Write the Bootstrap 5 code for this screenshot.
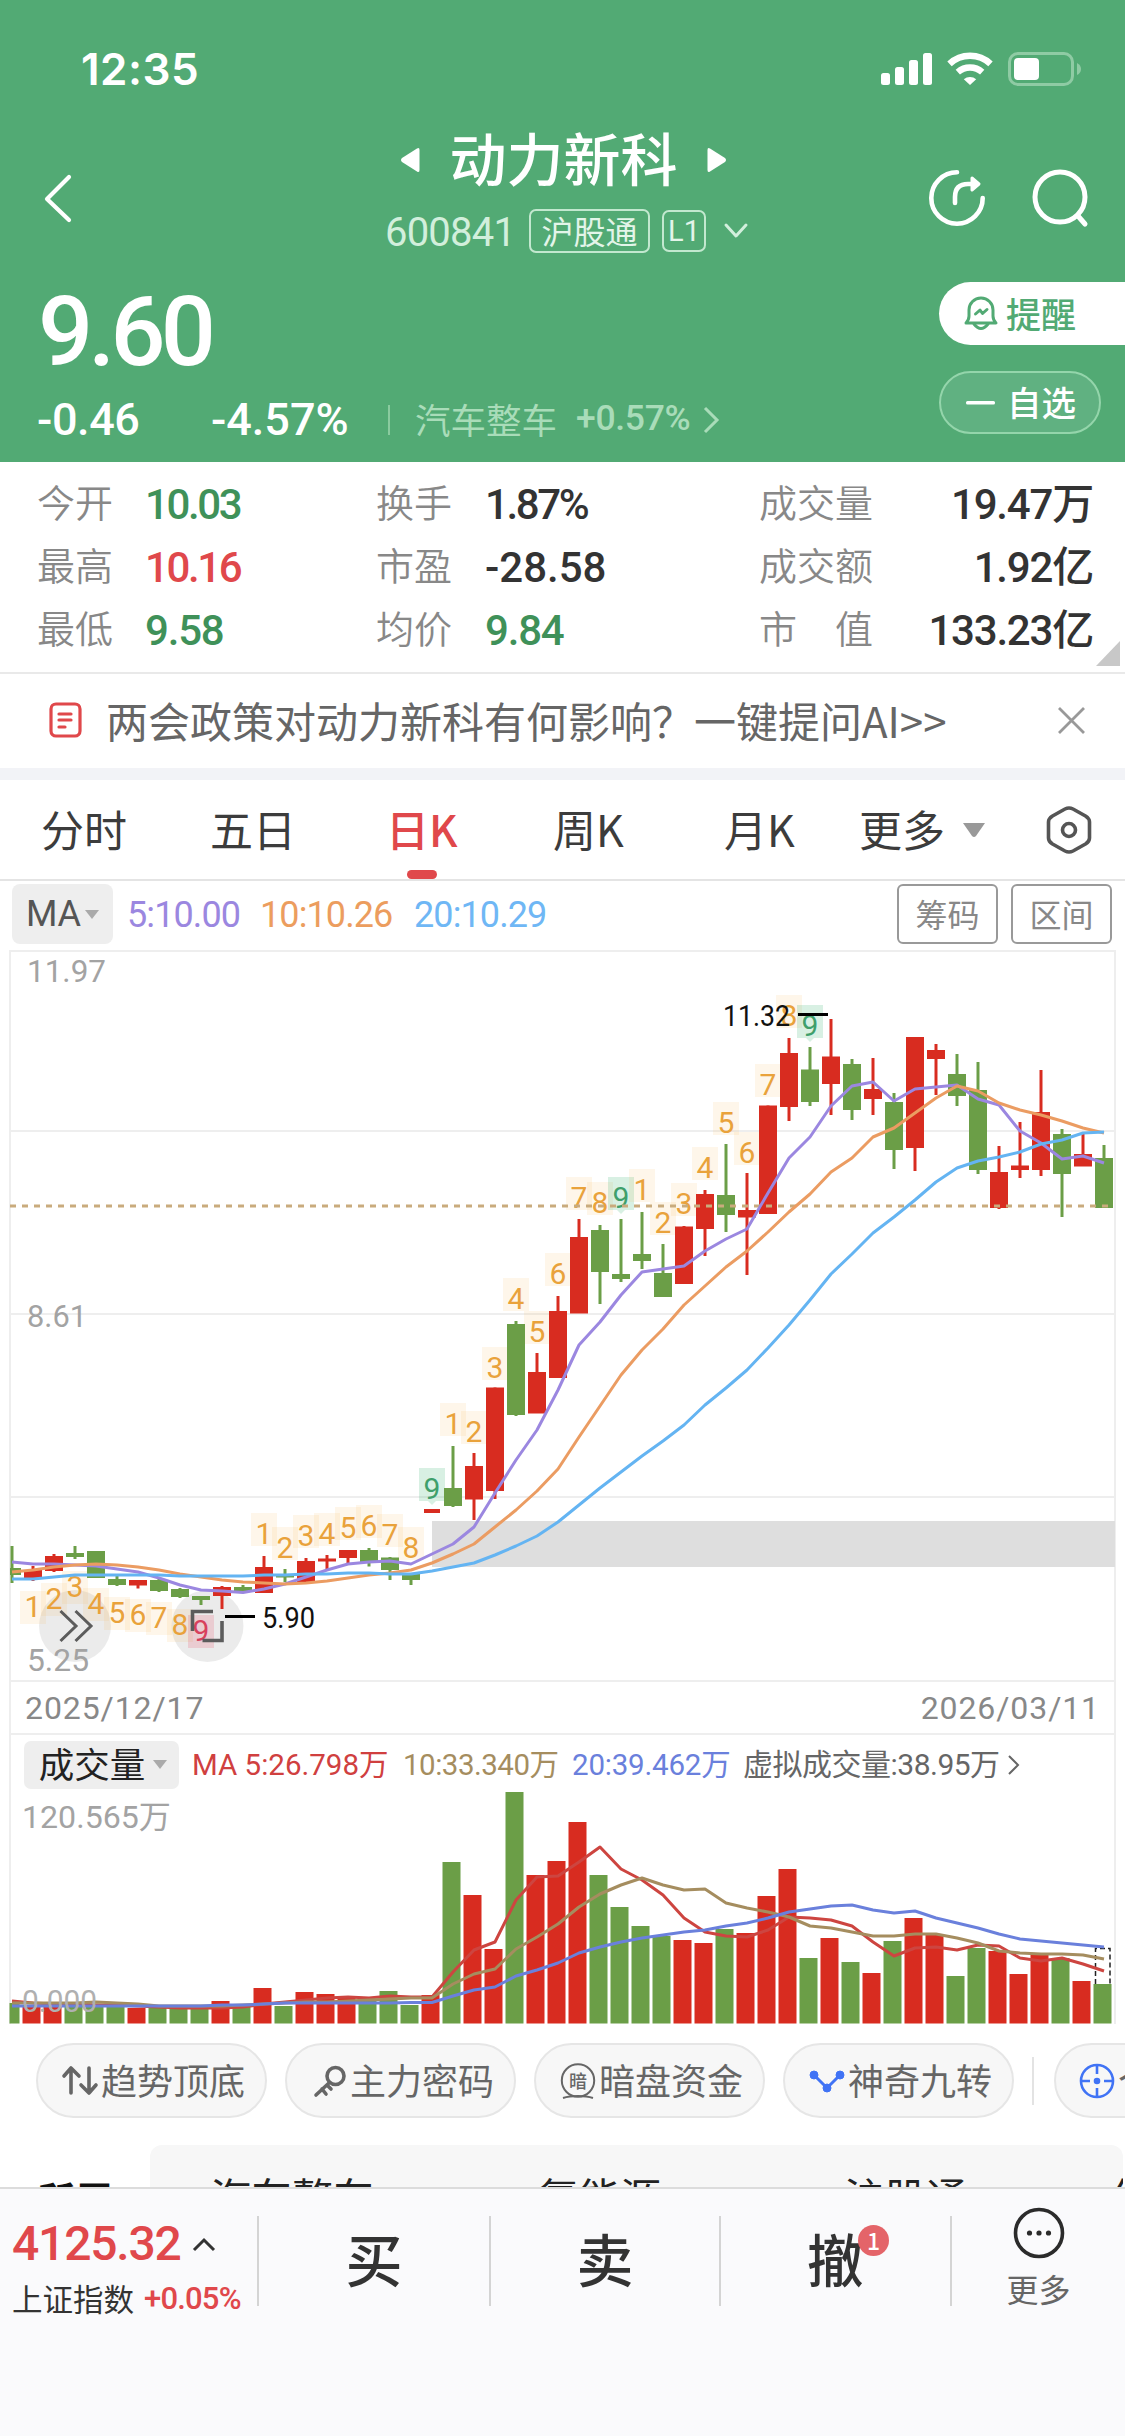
<!DOCTYPE html>
<html lang="zh-CN">
<head>
<meta charset="utf-8">
<meta name="viewport" content="width=device-width, initial-scale=1">
<title>动力新科 600841</title>
<link href="https://cdn.jsdelivr.net/npm/bootstrap@5.3.0/dist/css/bootstrap.min.css" rel="stylesheet">
<style>
  html,body{width:1125px;height:2436px;overflow:hidden}
  body{font-family:Roboto,"Noto Sans CJK SC",sans-serif;line-height:1;background:#fff;color:#333;white-space:nowrap}
  svg{display:block;flex:none;overflow:visible}
  svg text{font-family:Roboto,"Noto Sans CJK SC",sans-serif}
  .cjk{font-family:"Noto Sans CJK SC",sans-serif}
  .phone{height:2436px;overflow:hidden}
  .hero{height:462px;background:#52aa74;color:#fff}
  .statusbar{height:132px;padding:6px 43px 0 81px}
  .clock{font:600 44px/1 Inter,sans-serif;letter-spacing:.5px}
  .navrow{height:132px;padding:0 36px 0 44px}
  .side{width:200px}
  .titlecol{align-self:flex-start;margin-top:-3px;padding-right:7px}
  .ttl{font-size:57px;height:58px;font-weight:500}
  .ttl span{padding:0 29px 0 30px;margin-top:-4px}
  .ttl svg{margin-top:4px}
  .subrow{height:44px;margin-top:22px;padding-left:7px}
  .code{font-size:40px;color:#d2efdc;letter-spacing:-.8px;width:144px;padding-top:4px}
  .tagbox{border:2px solid #c2e8cf;border-radius:7px;height:44px;color:#e3f5e9;font-size:32px;padding-bottom:2px}
  .t1{width:121px}.t2{width:44px;height:42px;font-size:29px;margin-left:12px;padding-bottom:0}
  .price{font-size:97px;font-weight:500;letter-spacing:-4.8px;height:97px;padding-left:38px;margin-top:20px}
  .chg{font-size:45px;font-weight:500;height:45px;padding-left:37px;margin-top:16px}
  .sector{color:#a9dcb9;font-size:35.5px;font-weight:400;margin-top:-2px}
  .rightcol{width:186px;padding-top:18px}
  .pillA{height:63px;border-radius:32px 0 0 32px;background:#fff;color:#52aa74;font-size:35px;font-weight:500;padding:0 0 2px 25px}
  .pillB{height:63px;width:162px;margin-top:26px;border:2px solid #94d5ab;border-radius:32px;background:#60b181;font-size:34.5px;font-weight:500;padding:0 0 2px 25px}
  .stats{height:212px;padding:9px 32px 0 37px;border-bottom:2px solid #e9e9e9}
  .srow{height:63px}
  .lab{color:#888;font-size:38px;font-weight:350;padding-bottom:3px}
  .val{font-size:42px;font-weight:500;letter-spacing:-1.2px;padding-top:5px}
  .tight{letter-spacing:-2.4px}
  .sc1{width:108px}.sc2{width:231px}.sc3{width:109px}.sc4{width:274px}.sc5{width:117px}
  .up{color:#e0484b}.down{color:#3f9159}
  .news{height:94px;padding:0 40px 2px 49px;color:#666;font-size:42px}
  .band{height:12px;background:#f2f3f7}
  .tabsrow{height:101px;border-bottom:2px solid #e4e4e4;font-size:43px;color:#3c3c3c}
  .tabsrow>div{position:relative;height:99px;padding-bottom:3px}
  .ind{position:absolute;left:50%;margin-left:-15px;bottom:-3px;width:30px;height:9px;border-radius:5px;background:#e0484b}
  .marow{height:70px;padding:3px 13px 0 12px;font-size:36px}
  .mabtn{height:60px;width:101px;background:#eee;border-radius:8px;color:#555}
  .mavals{height:60px;letter-spacing:-.9px;padding:2px 0 0 14px}
  .mini{height:60px;width:101px;border:2px solid #999;border-radius:6px;color:#888;font-size:32px;padding-bottom:2px}
  .kframe{margin:-1px 9px 0;border:2px solid #eee;border-bottom:0;height:1074px}
  .dates{height:55px;border-top:2px solid #eee;border-bottom:2px solid #eee;padding:1px 14px 0 14px;font-size:32px;color:#888;letter-spacing:.9px}
  .volhead{height:58px;padding:1px 0 0 13px;font-size:30px}
  .volbtn{width:155px;height:48px;background:#eee;border-radius:7px;font-size:35.5px;color:#222;padding:0 0 3px 3px}
  .vm{font-size:29.5px;padding-top:2px}
  .chips{height:75px;margin-top:19px;padding-left:36px;gap:18px}
  .chip{flex:none;width:231px;height:75px;border:2px solid #e6e6e6;border-radius:38px;background:#f7f7f7;font-size:36px;color:#666;padding:0 0 3px 21px;gap:3px}
  .chip svg{margin-top:3px}
  .strip{height:42px;margin-top:27px;overflow:hidden}
  .own{width:150px;font-size:38px;font-weight:700;color:#111;padding:34px 0 0 37px}
  .panel{width:973px;height:80px;background:#f7f7f7;border-radius:12px;font-size:41px;color:#222;padding:30px 0 0 60px}
  .panel div{flex:none}
  .tray{height:249px;border-top:2px solid #dcdcdc;background:#fafafc}
  .cell{position:relative;height:90px;margin-top:27px;border-left:2px solid #d4d4d4;font-size:57px;font-weight:500;color:#333;padding-bottom:7px}
  .cnt{position:absolute;width:31px;height:31px;border-radius:50%;background:#e46469;color:#fff;font-size:23px;left:137px;top:9px}
</style>
<script src="https://cdn.jsdelivr.net/npm/bootstrap@5.3.0/dist/js/bootstrap.bundle.min.js"></script>
</head>
<body>
<div class="phone d-flex flex-column">
  <header class="hero">
    <div class="statusbar d-flex align-items-center justify-content-between">
      <span class="clock">12:35</span>
      <svg width="201" height="34" viewBox="0 0 201 34" fill="#fff">
        <rect x="0" y="21" width="9" height="12" rx="2.5"/><rect x="14" y="15" width="9" height="18" rx="2.5"/><rect x="28" y="8" width="9" height="25" rx="2.5"/><rect x="42" y="1" width="9" height="32" rx="2.5"/>
        <g fill="none" stroke="#fff" stroke-width="6.4"><path d="M68.500 11.800a30 30 0 0 1 41 0"/><path d="M76.800 20.200a18.300 18.300 0 0 1 24.400 0"/></g>
        <path d="M82.800 27.200a10 10 0 0 1 12.400 0L89 33z"/>
        <rect x="128.500" y="1.500" width="63" height="31" rx="8.500" fill="none" stroke="#8fcba4" stroke-width="3"/><rect x="133" y="6" width="25" height="22" rx="4"/><path d="M196 11q4 2 4 6t-4 6z" fill="#8fcba4"/>
      </svg>
    </div>
    <div class="navrow d-flex align-items-center justify-content-between">
      <div class="side"><svg width="28" height="48" viewBox="0 0 28 48" fill="none" stroke="#fff" stroke-width="4.200" stroke-linecap="round" stroke-linejoin="round"><path d="M25 3 3 25l22 21"/></svg></div>
      <div class="titlecol d-flex flex-column align-items-center">
        <div class="ttl cjk d-flex align-items-center">
          <svg width="20" height="26" viewBox="0 0 20 26" fill="#fff"><path d="M17 1.500q2.500-1.500 2.500 1.500v20q0 3-2.500 1.500L2 15q-2-2 0-4z"/></svg>
          <span>动力新科</span>
          <svg width="20" height="26" viewBox="0 0 20 26" fill="#fff"><path d="M3 1.500Q.5 0 .5 3v20q0 3 2.500 1.500L18 15q2-2 0-4z"/></svg>
        </div>
        <div class="subrow d-flex align-items-center">
          <span class="code">600841</span>
          <span class="tagbox t1 cjk d-flex align-items-center justify-content-center">沪股通</span>
          <span class="tagbox t2 d-flex align-items-center justify-content-center">L1</span>
          <svg style="margin-left:18px" width="24" height="16" viewBox="0 0 24 16" fill="none" stroke="#d2efdc" stroke-width="3" stroke-linecap="round" stroke-linejoin="round"><path d="m2 2 10 11L22 2"/></svg>
        </div>
      </div>
      <div class="side d-flex justify-content-end align-items-center">
        <svg width="58" height="58" viewBox="0 0 58 58" fill="none" stroke="#fff" stroke-width="4.600" stroke-linecap="round" stroke-linejoin="round"><path d="M29 3.300A25.700 25.700 0 1 0 54.700 29"/><path d="M27 34V28q0-13 13-13h8"/><path d="m44 9 7 6-7 6z" fill="#fff" stroke-width="3"/></svg>
        <svg style="margin-left:45px" width="58" height="58" viewBox="0 0 58 58" fill="none" stroke="#fff" stroke-width="5" stroke-linecap="round"><circle cx="29" cy="28" r="25"/><path d="m47 47 7 8"/></svg>
      </div>
    </div>
    <div class="d-flex justify-content-between">
      <div>
        <div class="price">9.60</div>
        <div class="chg d-flex align-items-center">
          <span style="width:174px;letter-spacing:-.4px">-0.46</span><span style="width:177px">-4.57%</span>
          <svg width="2" height="30"><path d="M1 0v30" stroke="#8acb9f" stroke-width="2"/></svg>
          <span class="sector cjk" style="margin-left:25px">汽车整车</span><span class="sector" style="margin-left:19px;font-weight:500;letter-spacing:-.3px">+0.57%</span>
          <svg style="margin-left:13px" width="16" height="26" viewBox="0 0 16 26" fill="none" stroke="#a9dcb9" stroke-width="3"><path d="m2 1 12 12L2 25"/></svg>
        </div>
      </div>
      <div class="rightcol">
        <div class="pillA cjk d-flex align-items-center">
          <svg style="margin-right:8px" width="34" height="36" viewBox="0 0 34 36" fill="none" stroke="#52aa74" stroke-width="3" stroke-linecap="round" stroke-linejoin="round"><path d="M2 28q3-3 3-7v-6a12 12 0 0 1 24 0v6q0 4 3 7z"/><path d="M10 29q7 9 14 0"/><path d="m11.500 19 4.500-4 2.500 3.500 4.500-4"/></svg>提醒</div>
        <div class="pillB cjk d-flex align-items-center"><svg style="margin-right:12px;margin-top:2px" width="29" height="4"><rect width="29" height="3.500" rx="1.500" fill="#fff"/></svg>自选</div>
      </div>
    </div>
  </header>

  <section class="stats position-relative">
    <div class="srow d-flex align-items-center"><span class="lab cjk sc1">今开</span><span class="val sc2 down tight">10.03</span><span class="lab cjk sc3">换手</span><span class="val sc4 tight">1.87%</span><span class="lab cjk sc5">成交量</span><span class="val ms-auto">19.47万</span></div>
    <div class="srow d-flex align-items-center"><span class="lab cjk sc1">最高</span><span class="val sc2 up tight">10.16</span><span class="lab cjk sc3">市盈</span><span class="val sc4" style="letter-spacing:0">-28.58</span><span class="lab cjk sc5">成交额</span><span class="val ms-auto">1.92亿</span></div>
    <div class="srow d-flex align-items-center"><span class="lab cjk sc1">最低</span><span class="val sc2 down">9.58</span><span class="lab cjk sc3">均价</span><span class="val sc4 down">9.84</span><span class="lab cjk sc5">市　值</span><span class="val ms-auto">133.23亿</span></div>
    <svg class="position-absolute bottom-0 end-0" style="margin:0 5px 6px 0" width="24" height="25"><path d="M24 0v25H0z" fill="#c8c8c8"/></svg>
  </section>

  <section class="news cjk d-flex align-items-center">
    <svg style="margin-right:24px" width="33" height="36" viewBox="0 0 33 36" fill="none" stroke="#e0484b" stroke-width="3.200" stroke-linecap="round"><rect x="2" y="2" width="29" height="32" rx="5"/><path d="M10 12h12M10 18h12M10 25h6"/></svg>
    <span>两会政策对动力新科有何影响？一键提问AI&gt;&gt;</span>
    <svg class="ms-auto" width="27" height="27" viewBox="0 0 27 27" stroke="#999" stroke-width="2.800"><path d="M1 1l25 25M26 1 1 26"/></svg>
  </section>
  <div class="band"></div>

  <nav class="tabsrow cjk d-flex align-items-center">
    <div class="d-flex align-items-center" style="padding-left:41px;width:210px">分时</div>
    <div class="d-flex align-items-center" style="width:176px">五日</div>
    <div class="d-flex align-items-center" style="width:167px"><span class="position-relative d-flex align-items-center h-100" style="color:#e0484b;font-weight:500">日K<i class="ind"></i></span></div>
    <div class="d-flex align-items-center" style="width:171px">周K</div>
    <div class="d-flex align-items-center" style="width:135px">月K</div>
    <div class="d-flex align-items-center" style="width:187px">更多<svg style="margin-left:18px;margin-top:4px" width="22" height="15"><path d="M0 0h22l-9 13q-2 2-4 0z" fill="#999"/></svg></div>
    <svg width="46" height="48" viewBox="0 0 46 48" fill="none" stroke="#555" stroke-width="3.600" stroke-linejoin="round"><path d="M19 3q4-2 8 0l12.500 7q4 2.500 4 6v16q0 3.500-4 6L27 45q-4 2-8 0L6.500 38q-4-2.500-4-6V16q0-3.500 4-6z"/><circle cx="23" cy="24" r="6.500"/></svg>
  </nav>

  <div class="marow d-flex align-items-start">
    <div class="mabtn d-flex align-items-center justify-content-center">MA<svg style="margin-left:4px" width="14" height="9"><path d="M0 0h14L7 9z" fill="#aaa"/></svg></div>
    <div class="mavals d-flex align-items-center">
      <span style="color:#9b87e0;width:133px">5:10.00</span>
      <span style="color:#ec9d5e;width:154px">10:10.26</span><span style="color:#6fb7f5">20:10.29</span>
    </div>
    <div class="mini cjk ms-auto d-flex align-items-center justify-content-center">筹码</div>
    <div class="mini cjk d-flex align-items-center justify-content-center" style="margin-left:13px">区间</div>
  </div>

  <div class="kframe">
    <svg id="kline" width="1103" height="728" viewBox="11 952 1103 728"></svg>
    <div class="dates d-flex align-items-center justify-content-between"><span>2025/12/17</span><span>2026/03/11</span></div>
    <div class="volhead d-flex align-items-center">
      <div class="volbtn cjk d-flex align-items-center justify-content-center">成交量<svg style="margin-left:8px;margin-top:3px" width="14" height="9"><path d="M0 0h14L7 9z" fill="#aaa"/></svg></div>
      <span class="vm" style="color:#d0403f;margin-left:13px;width:211px">MA 5:26.798万</span>
      <span class="vm" style="color:#a58d5f;width:169px;letter-spacing:-.5px">10:33.340万</span>
      <span class="vm" style="color:#6a80dc;width:171px;letter-spacing:-.2px">20:39.462万</span>
      <span style="color:#666;font-size:30px;letter-spacing:-.5px">虚拟成交量:38.95万</span>
      <svg style="margin-left:8px" width="12" height="20" fill="none" stroke="#666" stroke-width="2"><path d="m1 1 9 9-9 9"/></svg>
    </div>
    <svg id="volume" width="1103" height="232" viewBox="11 1793 1103 232"></svg>
  </div>

  <div class="chips d-flex align-items-center">
    <div class="chip cjk d-flex align-items-center"><svg style="margin-left:3px" width="36" height="29" viewBox="0 0 36 29" fill="none" stroke="#666" stroke-width="3.600" stroke-linecap="round" stroke-linejoin="round"><path d="M9 27V3M2 10l7-8 8 8M27 2v24M19 19l8 8 7-8"/></svg>趋势顶底</div>
    <div class="chip cjk d-flex align-items-center"><svg style="margin-left:5px" width="34" height="34" viewBox="0 0 34 34" fill="none" stroke="#666" stroke-width="3.600" stroke-linecap="round"><circle cx="22.500" cy="12" r="8.500"/><path d="M16 19 3 31M9 25l4 5M14 21l4 4"/></svg>主力密码</div>
    <div class="chip cjk d-flex align-items-center"><svg style="margin-left:3px" width="36" height="36" viewBox="0 0 36 36" fill="none" stroke="#666" stroke-width="2"><circle cx="18" cy="17.500" r="16.200"/><path d="M3 35q6-2 15-2t15 2"/><text x="18" y="24.500" text-anchor="middle" font-size="18" font-weight="500" fill="#666" stroke="none">暗</text></svg>暗盘资金</div>
    <div class="chip cjk d-flex align-items-center"><svg style="margin-left:3px" width="36" height="24" viewBox="0 0 36 24" fill="#4073f5" stroke="#4073f5"><path d="m5 6 13 13L31 6" fill="none" stroke-width="3"/><circle cx="5" cy="6" r="4"/><circle cx="31" cy="6" r="4"/><circle cx="18" cy="19" r="4"/></svg>神奇九转</div>
    <svg width="2" height="48"><path d="M1 0v48" stroke="#e3e3e3" stroke-width="2"/></svg>
    <div class="chip cjk d-flex align-items-center" style="margin-left:2px"><svg style="margin-left:2px" width="36" height="36" viewBox="0 0 36 36" fill="none" stroke="#4073f5" stroke-width="2.600"><circle cx="18" cy="18" r="16"/><path d="M18 2v9M18 25v9M2 18h9M25 18h9"/><circle cx="18" cy="18" r="2" fill="#4073f5"/></svg>个股诊断</div>
  </div>

  <div class="strip d-flex align-items-start">
    <div class="own cjk">所属</div>
    <div class="panel cjk d-flex"><div style="width:328px">汽车整车</div><div style="width:306px">氢能源</div><div style="width:265px">沪股通</div><div style="width:14px;overflow:hidden">化工</div></div>
  </div>

  <footer class="tray d-flex">
    <div style="width:257px;padding:29px 0 0 12px">
      <div class="d-flex align-items-center" style="font-size:48px;font-weight:500;color:#e0484b;height:52px;letter-spacing:-1.2px">4125.32<svg style="margin-left:12px" width="22" height="13" fill="none" stroke="#333" stroke-width="3"><path d="M1 12 11 2l10 10"/></svg></div>
      <div class="d-flex align-items-center" style="height:34px;margin-top:11px"><span class="cjk" style="font-size:30.5px;color:#333;width:132px">上证指数</span><span class="up" style="font-size:31px;font-weight:500;letter-spacing:-.8px">+0.05%</span></div>
    </div>
    <div class="cell cjk d-flex align-items-center justify-content-center" style="width:232px">买</div>
    <div class="cell cjk d-flex align-items-center justify-content-center" style="width:230px">卖</div>
    <div class="cell cjk d-flex align-items-center justify-content-center" style="width:231px">撤<span class="cnt d-flex align-items-center justify-content-center">1</span></div>
    <div class="cell cjk d-flex flex-column align-items-center" style="width:175px;font-size:32px;font-weight:400;color:#666">
      <svg style="margin-top:-9px" width="52" height="52" viewBox="0 0 52 52"><circle cx="26" cy="26" r="23.500" fill="none" stroke="#2b2b2b" stroke-width="3.600"/><g fill="#2b2b2b"><circle cx="16.500" cy="26" r="2.600"/><circle cx="26" cy="26" r="2.600"/><circle cx="35.500" cy="26" r="2.600"/></g></svg>
      <span style="margin-top:13px">更多</span>
    </div>
  </footer>
</div>

<script>
const R='#d82c20', G='#6b9e47', STEP=21, X0=12;
const X=i=>X0+i*STEP;
// [up?, body top, body bottom, high, low] in chart units
const K=[[0,1568,1575,1546,1583],[1,1570,1578,1566,1581],[1,1556,1571,1554,1572],[0,1553,1557,1546,1559],[0,1551,1578,1551,1578],[0,1579,1585,1576,1586],[1,1580,1585.5,1580,1588.5],[0,1580,1591,1578.5,1592],[0,1589,1597,1588,1598],[0,1596,1600,1596,1605],[1,1587,1596,1586,1609],[0,1587,1591,1585,1591],[1,1567,1593,1556,1593],[0,1574,1577.5,1569,1582],[1,1561,1582,1558,1582],[1,1558.5,1561.5,1555,1570],[1,1550,1558,1550,1564],[0,1550,1562,1548,1566.5],[0,1557.5,1570,1557,1580],[0,1573,1580,1573,1585],[1,1509,1513,1509,1513],[0,1488,1506,1446,1507],[1,1466,1499.5,1453,1520],[1,1387.5,1491,1387.5,1499],[0,1324,1415,1321,1416],[1,1372,1413.500,1353,1413],[1,1311,1378,1296,1378],[1,1237,1313.5,1219,1313],[0,1230,1272,1225,1304],[0,1274,1279,1219,1282],[0,1254,1261,1212,1269],[0,1273,1297,1244,1297],[1,1226.5,1284,1226,1284],[1,1194,1229,1190,1256],[0,1195,1215,1144,1232],[1,1210,1217.5,1173,1275],[1,1105.5,1214,1105.5,1214],[1,1053,1107,1038,1121],[0,1069.5,1102,1047,1106],[1,1056.5,1084,1019,1115],[0,1064,1110,1059,1120],[1,1089,1099,1058,1115],[0,1102,1150,1093,1169],[1,1037,1148,1037,1171],[1,1050,1059,1044,1095],[0,1074,1096,1054,1106],[0,1090,1170,1062,1174],[1,1172,1208,1146,1209],[1,1165.500,1170,1122,1178],[1,1112,1170,1070,1176],[0,1134,1174,1129,1217],[1,1154,1166.5,1132,1166],[0,1158,1208,1145,1208]];
const MA5=[1562,1564,1564,1565,1566,1569,1572,1578,1585,1590,1591,1592.5,1589,1584,1577,1570,1564,1562,1561,1564,1554,1544,1527,1493,1460,1430,1390,1345,1322,1295,1272,1269,1266,1251,1239,1229,1193,1158,1137,1106,1086,1082,1101,1089,1087,1085,1099,1105,1131,1143,1159,1156,1163];
const MA10=[1572,1570,1567,1565,1564,1565,1567,1570,1574,1577,1580,1582,1583,1584,1583,1581,1578,1575,1573,1570,1563,1554,1544,1527,1510,1491,1469,1437,1406,1375,1350,1329,1305,1286,1267,1251,1232,1212,1194,1172,1158,1137,1128,1113,1098,1086,1091,1103,1110,1115,1121,1128,1133];
const MA20=[1579,1579,1577,1575,1575,1575,1575,1575,1576,1576,1576,1576,1575,1575,1574,1574,1573,1573,1574,1574,1571,1567,1563,1555,1546,1536,1522,1505,1488,1472,1456,1441,1425,1405,1388,1370,1348,1325,1300,1274,1254,1233,1217,1200,1182,1168,1161,1157,1152,1144,1140,1133,1132];
// nine-turn marks: [index, digit, centre y, 1 = below the candle]
const N=[[1,1,1606,1],[2,2,1598,1],[3,3,1586,1],[4,4,1603,1],[5,5,1612,1],[6,6,1614,1],[7,7,1617,1],[8,8,1624,1],[9,9,1630,1],[12,1,1533],[13,2,1547],[14,3,1535],[15,4,1533],[16,5,1527],[17,6,1525],[18,7,1534],[19,8,1547],[20,9,1488],[21,1,1423],[22,2,1431],[23,3,1367],[24,4,1298],[25,5,1331],[26,6,1273],[27,7,1197],[28,8,1202],[29,9,1197],[30,1,1189],[31,2,1222],[32,3,1203],[33,4,1167],[34,5,1122],[35,6,1152],[36,7,1084],[37,8,1015],[38,9,1025]];
const line=(a,c,w=3)=>`<polyline fill="none" stroke="${c}" stroke-width="${w}" stroke-linejoin="round" points="${a.map((y,i)=>X(i)+','+y).join(' ')}"/>`;
const label=(x,y,s,w,c,f=32)=>`<text x="${x}" y="${y}" font-size="${f}" fill="${c}" textLength="${w}" lengthAdjust="spacingAndGlyphs">${s}</text>`;
let s='';
for(const y of [1131,1314,1497]) s+=`<path d="M11 ${y}H1114" stroke="#eee" stroke-width="2"/>`;
s+='<rect x="432" y="1521" width="683" height="46" fill="#dedede"/>';
for(const cx of [75,207.500]) s+=`<circle cx="${cx}" cy="1626" r="36" fill="#000" fill-opacity=".08"/>`;
s+=label(27,982,'11.97',79,'#a3a3a3')+label(27,1327,'8.61',60,'#a3a3a3')+label(27,1671,'5.25',62,'#a3a3a3');
for(const [i,d,y,b] of N){
  const nine=d===9, red=nine&&b;
  const bg=nine?(red?'#e8506a':'#3cb371'):'#f5b95a', fg=nine?(red?'#d8405c':'#3f9f6b'):'#e9a23b';
  const t=b?y-15:y-20;
  s+=`<rect x="${X(i)-13}" y="${t}" width="26" height="33" fill="${bg}" fill-opacity="${nine?.2:.13}"/>`;
  if(nine&&!b) s+=`<path d="M${X(i)-4} ${t+33}h8l-4 4z" fill="${bg}" fill-opacity=".2"/>`;
  s+=`<text x="${X(i)}" y="${y+10.700}" text-anchor="middle" font-size="30" fill="${fg}">${d}</text>`;
}
s+='<g fill="none" stroke="#5c5c5c" stroke-width="3"><path d="M60.500 1611 76 1626l-15.500 15M75.500 1611 91 1626l-15.500 15"/><path d="M213 1611.500H192.500V1631M222 1621V1640.500H202.500" stroke-width="3.600"/></g>';
K.forEach(([u,t,b,h,l],i)=>{const c=u?R:G,w=i===20?16:18,x0=i?X(i)-w/2:10;
  s+=`<path d="M${X(i)} ${h}V${l}" stroke="${c}" stroke-width="3"/><rect x="${x0}" y="${t}" width="${i?w:X(0)+9-10}" height="${b-t}" fill="${c}"/>`});
s+='<path d="M10 1206H1114" stroke="#c9ab7d" stroke-width="3" stroke-dasharray="6 6"/>';
s+=line(MA5,'#9b87e0')+line(MA10,'#eb9c62')+line(MA20,'#64b4f2');
s+='<path d="M798 1014.500H828M225 1616.500H255" stroke="#000" stroke-width="3"/>';
s+=label(723,1025.500,'11.32',67,'#111',30)+label(262,1628,'5.90',53,'#111',30);
document.getElementById('kline').innerHTML=s;

const V=[2003,2006,2005,2005,2004,2007,2008,2007,2008,2008,2001,2005,1988,2006,1992,1994,1998,2001,1991,2005,1995,1862,1895,1949,1792,1875,1861,1822,1875,1907,1926,1936,1940,1943,1929,1933,1896,1869,1958,1938,1962,1973,1941,1918,1934,1976,1948,1951,1974,1955,1958,1981,1984];
const V5=[2001,2003,2004,2004,2005,2005,2006,2007,2008,2008,2008,2007,2004,2002,2000,1998,1997,1998,1996,1997,1997,1972,1950,1942,1900,1877,1876,1862,1847,1869,1880,1895,1918,1932,1936,1937,1930,1917,1918,1920,1926,1942,1956,1948,1947,1950,1945,1946,1958,1961,1958,1964,1971];
const V10=[2003,2003,2003,2003,2002,2003,2004,2006,2006,2006,2006,2005,2004,2003,2002,2002,2001,2000,1999,1998,1998,1984,1974,1969,1949,1937,1924,1907,1894,1885,1878,1885,1890,1889,1903,1908,1912,1917,1926,1928,1932,1936,1936,1934,1934,1938,1943,1951,1953,1954,1954,1955,1959];
const V20=[2006,2006,2006,2006,2006,2006,2006,2006,2006,2006,2005,2005,2004,2003,2003,2003,2003,2003,2003,2002.5,2002.5,1996,1990,1987,1976,1970,1963,1953,1947,1942,1938,1935,1932,1930,1926,1923,1918,1912,1909,1906,1905,1910,1913,1911,1918,1923,1928,1934,1939,1941,1943,1945,1947];
const RED=new Set([1,2,6,10,12,14,15,16,20,22,23,25,26,27,32,33,35,36,37,39,41,43,44,47,48,49,51]);
let v='';
V.forEach((t,i)=>{const x=Math.max(9.500,X(i)-10.500);v+=`<rect x="${x}" y="${t}" width="${X(i)+7.500-x}" height="${2023.500-t}" fill="${RED.has(i)?R:G}"/>`});
v+='<path d="M1095.500 1984V1948.500H1110V1984" fill="none" stroke="#222" stroke-width="1.500" stroke-dasharray="5 3"/>';
v+=line(V5,'#cd4540')+line(V10,'#a58d5f')+line(V20,'#6a80dc');
v+=label(22,1828,'120.565万',149,'#a3a3a3')+label(22,2012,'0.000',75,'#b0b0b0');
document.getElementById('volume').innerHTML=v;
</script>
</body>
</html>
